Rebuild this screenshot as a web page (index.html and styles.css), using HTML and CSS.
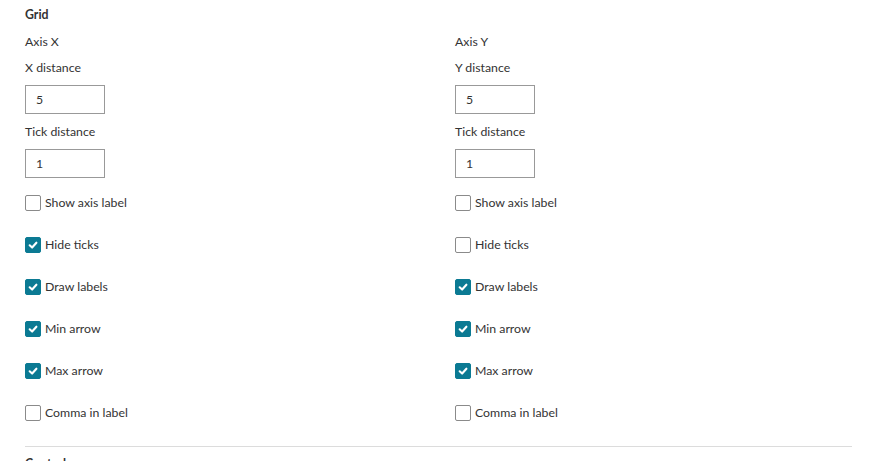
FILE: index.html
```html
<!DOCTYPE html>
<html lang="en">

<head>
    <meta charset="UTF-8">
    <meta name="viewport" content="width=device-width, initial-scale=1.0">
    <title>Grid settings</title>
    <link rel="stylesheet" href="styles.css">
</head>

<body>
    <div class="panel">
        <div class="sectionTitle">Grid</div>
        <div class="axes">
            <div class="axis">
                <div class="axisName">Axis X</div>
                <label class="fieldLabel" for="xDistance">X distance</label>
                <input class="numField" type="text" id="xDistance" value="5">
                <label class="fieldLabel" for="xTick">Tick distance</label>
                <input class="numField" type="text" id="xTick" value="1">
                <div class="checks">
                    <div class="check"><span class="box"></span>Show axis label</div>
                    <div class="check"><span class="box on"><svg viewBox="0 0 16 16"><path d="M4.2 8.3 L7 10.9 L11.9 5.4" /></svg></span>Hide ticks</div>
                    <div class="check"><span class="box on"><svg viewBox="0 0 16 16"><path d="M4.2 8.3 L7 10.9 L11.9 5.4" /></svg></span>Draw labels</div>
                    <div class="check"><span class="box on"><svg viewBox="0 0 16 16"><path d="M4.2 8.3 L7 10.9 L11.9 5.4" /></svg></span>Min arrow</div>
                    <div class="check"><span class="box on"><svg viewBox="0 0 16 16"><path d="M4.2 8.3 L7 10.9 L11.9 5.4" /></svg></span>Max arrow</div>
                    <div class="check"><span class="box"></span>Comma in label</div>
                </div>
            </div>
            <div class="axis">
                <div class="axisName">Axis Y</div>
                <label class="fieldLabel" for="yDistance">Y distance</label>
                <input class="numField" type="text" id="yDistance" value="5">
                <label class="fieldLabel" for="yTick">Tick distance</label>
                <input class="numField" type="text" id="yTick" value="1">
                <div class="checks">
                    <div class="check"><span class="box"></span>Show axis label</div>
                    <div class="check"><span class="box"></span>Hide ticks</div>
                    <div class="check"><span class="box on"><svg viewBox="0 0 16 16"><path d="M4.2 8.3 L7 10.9 L11.9 5.4" /></svg></span>Draw labels</div>
                    <div class="check"><span class="box on"><svg viewBox="0 0 16 16"><path d="M4.2 8.3 L7 10.9 L11.9 5.4" /></svg></span>Min arrow</div>
                    <div class="check"><span class="box on"><svg viewBox="0 0 16 16"><path d="M4.2 8.3 L7 10.9 L11.9 5.4" /></svg></span>Max arrow</div>
                    <div class="check"><span class="box"></span>Comma in label</div>
                </div>
            </div>
        </div>
        <div class="divider"></div>
        <div class="sectionTitle lower">Controls</div>
    </div>
</body>

</html>
```

FILE: styles.css
```css
body {
    margin: 0px;
    padding: 0px;
    background-color: white;
    font-family: Lato, "Open Sans", sans-serif;
    font-size: 12.3px;
    color: #333;
}

.panel {
    padding: 0 17px 0 25px;

    .sectionTitle {
        font-weight: bold;
        line-height: 16px;
        padding-top: 7px;
        color: #333;
    }

    .sectionTitle.lower {
        padding-top: 9px;
    }

    .axes {
        display: grid;
        grid-template-columns: 430px 1fr;
        margin-top: 11px;
    }

    .axis {
        display: flex;
        flex-direction: column;
        align-items: flex-start;

        .axisName {
            line-height: 16px;
        }

        .fieldLabel {
            line-height: 16px;
            margin-top: 10px;
        }

        .fieldLabel + .numField {
            margin-top: 9px;
        }

        .numField + .fieldLabel {
            margin-top: 10px;
        }

        .numField {
            box-sizing: border-box;
            width: 80px;
            height: 29px;
            border: 1px solid #999;
            border-radius: 0;
            padding: 0 0 0 10px;
            font-family: inherit;
            font-size: 12.3px;
            color: #333;
            outline: none;
        }
    }

    .checks {
        display: flex;
        flex-direction: column;
        gap: 26px;
        margin-top: 17px;

        .check {
            display: flex;
            align-items: center;
            gap: 4px;
            height: 16px;
            line-height: 16px;
        }

        .box {
            box-sizing: border-box;
            width: 16px;
            height: 16px;
            border: 1px solid #8a8a8a;
            border-radius: 2px;
            display: flex;
            align-items: center;
            justify-content: center;
        }

        .box.on {
            background-color: #0b7a93;
            border-color: #0b7a93;

            svg {
                width: 16px;
                height: 16px;

                path {
                    fill: none;
                    stroke: white;
                    stroke-width: 2.4;
                    stroke-linecap: round;
                    stroke-linejoin: round;
                }
            }
        }
    }

    .divider {
        height: 1px;
        background-color: #dcdcdc;
        margin-top: 25px;
    }
}
```
